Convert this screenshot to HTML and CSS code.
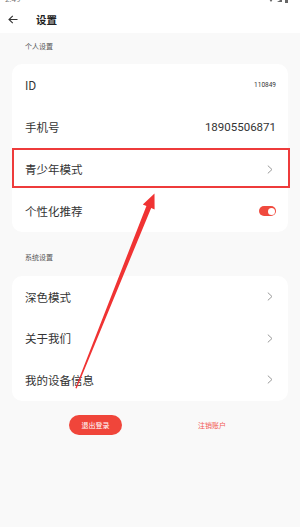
FILE: index.html
```html
<!DOCTYPE html>
<html lang="zh">
<head>
<meta charset="utf-8">
<link rel="stylesheet" href="styles.css">
</head>
<body>
<div class="screen">
  <div class="status">
    <span class="time">2:49</span>
    <span class="sicons">
      <svg width="22" height="4" viewBox="0 0 22 4"><path d="M1 0 L5 0 L3 3 Z" fill="#666"/><path d="M9 3 L14 0 L14 3 Z" fill="#666"/><rect x="17" y="0" width="3" height="4" fill="#666"/></svg>
    </span>
  </div>
  <header class="topbar">
    <svg class="back" width="10" height="9" viewBox="0 0 10 9"><path d="M9.5 4.5 H1.2 M4.8 0.8 L1 4.5 L4.8 8.2" fill="none" stroke="#333" stroke-width="1.1"/></svg>
    <span class="title">设置</span>
  </header>

  <div class="section-label first">个人设置</div>
  <div class="card">
    <div class="row"><span class="label">ID</span><span class="value small">110849</span></div>
    <div class="row"><span class="label">手机号</span><span class="value">18905506871</span></div>
    <div class="row highlight"><span class="label">青少年模式</span><svg class="chev" width="6" height="9" viewBox="0 0 6 9"><path d="M0.8 0.6 L5 4.5 L0.8 8.4" fill="none" stroke="#9a9a9a" stroke-width="1"/></svg></div>
    <div class="row"><span class="label">个性化推荐</span><span class="toggle"><span class="knob"></span></span></div>
  </div>

  <div class="section-label">系统设置</div>
  <div class="card">
    <div class="row"><span class="label">深色模式</span><svg class="chev" width="6" height="9" viewBox="0 0 6 9"><path d="M0.8 0.6 L5 4.5 L0.8 8.4" fill="none" stroke="#9a9a9a" stroke-width="1"/></svg></div>
    <div class="row"><span class="label">关于我们</span><svg class="chev" width="6" height="9" viewBox="0 0 6 9"><path d="M0.8 0.6 L5 4.5 L0.8 8.4" fill="none" stroke="#9a9a9a" stroke-width="1"/></svg></div>
    <div class="row"><span class="label">我的设备信息</span><svg class="chev" width="6" height="9" viewBox="0 0 6 9"><path d="M0.8 0.6 L5 4.5 L0.8 8.4" fill="none" stroke="#9a9a9a" stroke-width="1"/></svg></div>
  </div>

  <div class="actions">
    <span class="logout">退出登录</span>
    <span class="cancel">注销账户</span>
  </div>

  <svg class="annot" width="300" height="527" viewBox="0 0 300 527">
    <polygon points="154.5,193.5 154.6,209.5 151.2,208 76.6,388.4 75.4,387.9 146.4,206 142.8,204.6" fill="#f03333"/>
  </svg>
</div>
</body>
</html>
```

FILE: styles.css
```css
* { box-sizing: border-box; }
html, body { margin: 0; padding: 0; }
body {
  width: 300px;
  height: 527px;
  overflow: hidden;
  background: #f9f9f9;
  font-family: "Noto Sans CJK SC", "Noto Sans", Roboto, sans-serif;
  color: #333;
}
.screen { position: relative; width: 300px; height: 527px; }
.status {
  height: 6px;
  background: #fff;
  display: flex;
  justify-content: space-between;
  overflow: hidden;
  padding: 0 10px 0 5px;
}
.time {
  font-family: Roboto, sans-serif;
  font-size: 8px;
  line-height: 8px;
  margin-top: -4px;
  color: #777;
}
.sicons { display: flex; margin-top: -1px; }
.topbar {
  height: 27px;
  background: #fff;
  display: flex;
  align-items: center;
  padding-left: 8px;
  padding-bottom: 1px;
}
.back { display: block; }
.title {
  margin-left: 18px;
  font-size: 10.5px;
  font-weight: 700;
  color: #222;
}
.section-label {
  font-size: 7px;
  line-height: 10px;
  color: #555;
  padding-left: 25px;
  margin-top: 20px;
  margin-bottom: 14px;
}
.section-label.first { margin-top: 8px; margin-bottom: 13px; }
.card {
  margin: 0 12px;
  background: #fff;
  border-radius: 10px;
}
.row {
  height: 42px;
  display: flex;
  align-items: center;
  justify-content: space-between;
  padding: 0 12px 0 13px;
}
.card + .section-label + .card .row { height: 41.5px; }
.label { font-size: 11.5px; color: #333; }
.value {
  font-family: Roboto, sans-serif;
  font-size: 11.5px;
  color: #333;
}
.value.small { font-size: 6.5px; }
.chev { display: block; margin-right: 3px; }
.highlight {
  position: relative;
}
.highlight::after {
  content: "";
  position: absolute;
  left: 0;
  right: -2px;
  top: 0;
  bottom: 2px;
  border: 2px solid #ee3b3b;
}
.toggle {
  width: 17px;
  height: 10px;
  border-radius: 5px;
  background: #f04a3e;
  position: relative;
}
.knob {
  position: absolute;
  right: 1.5px;
  top: 1.5px;
  width: 7px;
  height: 7px;
  border-radius: 50%;
  background: #fff;
}
.actions {
  display: flex;
  align-items: center;
  padding-left: 69px;
  margin-top: 14px;
}
.logout {
  width: 53px;
  height: 20px;
  border-radius: 10px;
  background: #f0453a;
  color: #fff;
  font-size: 7px;
  display: flex;
  align-items: center;
  justify-content: center;
}
.cancel {
  margin-left: 76px;
  font-size: 7px;
  color: #f25a55;
}
.annot { position: absolute; left: 0; top: 0; pointer-events: none; }
```
